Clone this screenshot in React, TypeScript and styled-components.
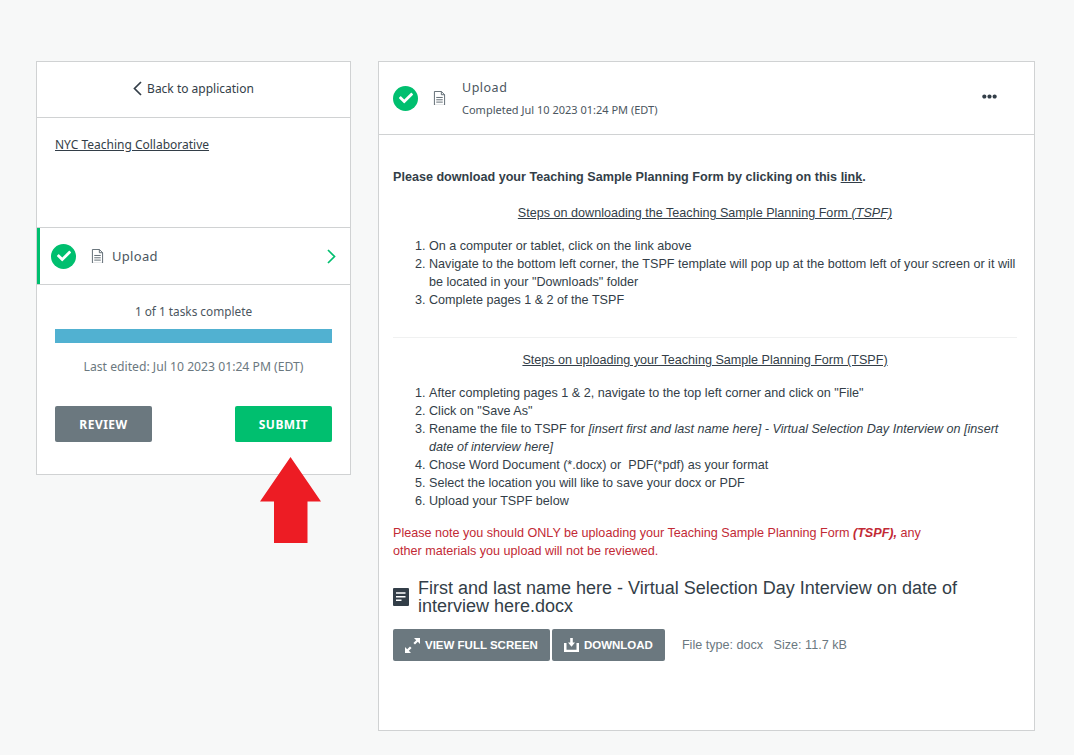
import React from 'react';
import styled, { createGlobalStyle } from 'styled-components';
import { FaCheck, FaEllipsisH } from 'react-icons/fa';

const plex = '"Noto Sans", "Open Sans", sans-serif';
const arial = '"Liberation Sans", Arial, sans-serif';

const DocIcon = ({ size = 15 }: { size?: number }) => (
  <svg width={size} height={size * 1.14} viewBox="0 0 14 16" fill="none" stroke="#59646d" strokeWidth="1">
    <path d="M1.5.5h7.500l3.500 3.500v11.500h-11z" />
    <path d="M9 .5v3.500h3.500M3.500 7h7M3.500 9.500h7M3.500 12h7" />
  </svg>
);

const StatusIcon = () => (
  <StatusCircle>
    <FaCheck size={14} color="#fff" />
  </StatusCircle>
);

const Chevron = ({ color, flip }: { color: string; flip?: boolean }) => (
  <svg width="9" height="15" viewBox="0 0 9 15" fill="none" stroke={color} strokeWidth="1.700">
    <path d={flip ? 'M1 1l6.500 6.500L1 14' : 'M8 1L1.500 7.500 8 14'} />
  </svg>
);

const App = () => {
  return (
    <>
      <GlobalStyle />
      <Page>
        <LeftColumn>
          <SidePanel>
            <BackRow>
              <Chevron color="#333e48" />
              <span>Back to application</span>
            </BackRow>
            <OrgBlock>
              <OrgLink>NYC Teaching Collaborative</OrgLink>
            </OrgBlock>
            <TaskRow>
              <StatusIcon />
              <DocSlot>
                <DocIcon size={13} />
              </DocSlot>
              <TaskName>Upload</TaskName>
              <TaskChevron>
                <Chevron color="#00bf6f" flip />
              </TaskChevron>
            </TaskRow>
            <Progress>
              <ProgressLabel>1 of 1 tasks complete</ProgressLabel>
              <ProgressBar />
              <LastEdited>Last edited: Jul 10 2023 01:24 PM (EDT)</LastEdited>
              <SideActions>
                <SideButton>REVIEW</SideButton>
                <SideButton $primary>SUBMIT</SideButton>
              </SideActions>
            </Progress>
          </SidePanel>
          <RedArrow width="61" height="86" viewBox="0 0 61 86">
            <path d="M30.500 0 61 44.500H47.500V86H14V44.500H0z" fill="#ed1c24" />
          </RedArrow>
        </LeftColumn>

        <MainPanel>
          <MainHeader>
            <StatusIcon />
            <HeaderDoc>
              <DocIcon size={13} />
            </HeaderDoc>
            <HeaderText>
              <HeaderTitle>Upload</HeaderTitle>
              <HeaderSub>Completed Jul 10 2023 01:24 PM (EDT)</HeaderSub>
            </HeaderText>
            <MoreButton>
              <FaEllipsisH size={15} color="#333e48" />
            </MoreButton>
          </MainHeader>

          <Body>
            <Lead>
              Please download your Teaching Sample Planning Form by clicking on this <u>link</u>.
            </Lead>
            <StepsTitle>
              Steps on downloading the Teaching Sample Planning Form <em>(TSPF)</em>
            </StepsTitle>
            <Steps>
              <li>On a computer or tablet, click on the link above</li>
              <li>
                Navigate to the bottom left corner, the TSPF template will pop up at the bottom left of your screen or
                it will be located in your "Downloads" folder
              </li>
              <li>Complete pages 1 &amp; 2 of the TSPF</li>
            </Steps>
            <Divider />
            <UploadTitle>Steps on uploading your Teaching Sample Planning Form (TSPF)</UploadTitle>
            <Steps>
              <li>After completing pages 1 &amp; 2, navigate to the top left corner and click on "File"</li>
              <li>Click on "Save As"</li>
              <li>
                Rename the file to TSPF for{' '}
                <em>[insert first and last name here] - Virtual Selection Day Interview on [insert date of interview here]</em>
              </li>
              <li>Chose Word Document (*.docx) or&nbsp; PDF(*pdf) as your format</li>
              <li>Select the location you will like to save your docx or PDF</li>
              <li>Upload your TSPF below</li>
            </Steps>
            <Warning>
              Please note you should ONLY be uploading your Teaching Sample Planning Form{' '}
              <strong>
                <em>(TSPF),</em>
              </strong>{' '}
              any
              <br />
              other materials you upload will not be reviewed.
            </Warning>
            <FileTitleRow>
              <svg width="16" height="18" viewBox="0 0 16 18">
                <rect width="16" height="18" rx="1" fill="#333e48" />
                <path d="M3 5h9.500M3 8.700h9.500M3 12.300h5.500" stroke="#fff" strokeWidth="1.400" />
              </svg>
              <FileTitle>First and last name here - Virtual Selection Day Interview on date of interview here.docx</FileTitle>
            </FileTitleRow>
            <FileActions>
              <FileButton>
                <svg width="15" height="15" viewBox="0 0 15 15" fill="#fff">
                  <path d="M9 0h6v6l-2.200-2.200-2.800 2.800-1.600-1.600 2.800-2.800zM6 15H0V9l2.200 2.200 2.800-2.800 1.600 1.600-2.800 2.800z" />
                </svg>
                VIEW FULL SCREEN
              </FileButton>
              <FileButton>
                <svg width="15" height="14" viewBox="0 0 15 14" fill="#fff">
                  <path d="M6.200 0h2.600v4.500h2.200L7.500 8.800 4 4.500h2.200z" />
                  <path d="M0 5h2.500v6.800h10V5H15v9H0z" />
                </svg>
                DOWNLOAD
              </FileButton>
              <FileMeta>File type: docx&nbsp;&nbsp; Size: 11.7 kB</FileMeta>
            </FileActions>
          </Body>
        </MainPanel>
      </Page>
    </>
  );
};

const GlobalStyle = createGlobalStyle`
  html, body {
    margin: 0;
    background: #f7f8f8;
  }
  * {
    box-sizing: border-box;
  }
`;

const Page = styled.div`
  display: flex;
  align-items: flex-start;
  gap: 27px;
  padding: 61px 39px 24px 36px;
  width: 1074px;
  height: 755px;
  overflow: hidden;
`;

const LeftColumn = styled.div`
  position: relative;
  width: 315px;
  flex: none;
`;

const SidePanel = styled.section`
  height: 414px;
  background: #fff;
  border: 1px solid #d0d2d3;
  font-family: ${plex};
  color: #333e48;
`;

const BackRow = styled.div`
  height: 56px;
  display: flex;
  align-items: center;
  justify-content: center;
  gap: 5px;
  padding-bottom: 2px;
  font-size: 12px;
  border-bottom: 1px solid #d0d2d3;
`;

const OrgBlock = styled.div`
  height: 109px;
  padding: 14px 18px 0;
`;

const OrgLink = styled.a`
  font-size: 12px;
  text-decoration: underline;
  color: #333e48;
`;

const TaskRow = styled.div`
  height: 58px;
  display: flex;
  align-items: center;
  padding-left: 14px;
  border-top: 1px solid #d0d2d3;
  border-bottom: 1px solid #d0d2d3;
  box-shadow: inset 3px 0 0 #00bf6f;
`;

const StatusCircle = styled.span`
  width: 25px;
  height: 25px;
  flex: none;
  border-radius: 50%;
  background: #00bf6f;
  display: flex;
  align-items: center;
  justify-content: center;
`;

const DocSlot = styled.span`
  display: flex;
  margin-left: 15px;
`;

const TaskName = styled.span`
  margin-left: 8px;
  font-size: 13px;
  letter-spacing: 0.3px;
  color: #4b5660;
`;

const TaskChevron = styled.span`
  display: flex;
  margin-left: auto;
  margin-right: 14px;
`;

const Progress = styled.div`
  padding: 17px 18px 0;
  text-align: center;
`;

const ProgressLabel = styled.div`
  font-size: 11.800px;
  line-height: 18px;
  color: #4b5660;
`;

const ProgressBar = styled.div`
  height: 14px;
  margin-top: 9px;
  background: #51b1d1;
`;

const LastEdited = styled.div`
  margin-top: 15px;
  font-size: 12.200px;
  line-height: 18px;
  color: #6b7880;
`;

const SideActions = styled.div`
  display: flex;
  justify-content: space-between;
  margin-top: 30px;
`;

const SideButton = styled.button<{ $primary?: boolean }>`
  width: 97px;
  height: 36px;
  border: none;
  border-radius: 2px;
  background: ${(p) => (p.$primary ? '#00bf6f' : '#6b787f')};
  color: #fff;
  font-family: ${plex};
  font-size: 12px;
  font-weight: 700;
  letter-spacing: 0.5px;
`;

const RedArrow = styled.svg`
  position: absolute;
  left: 224px;
  top: 396px;
`;

const MainPanel = styled.main`
  width: 657px;
  height: 670px;
  flex: none;
  background: #fff;
  border: 1px solid #d0d2d3;
`;

const MainHeader = styled.header`
  height: 73px;
  display: flex;
  align-items: center;
  padding: 0 37px 0 14px;
  border-bottom: 1px solid #d0d2d3;
  font-family: ${plex};
  color: #4b5660;
`;

const HeaderDoc = styled.span`
  display: flex;
  margin-left: 15px;
`;

const HeaderText = styled.div`
  margin-left: 16px;
`;

const HeaderTitle = styled.div`
  font-size: 12.500px;
  line-height: 18px;
  letter-spacing: 0.5px;
`;

const HeaderSub = styled.div`
  margin-top: 5px;
  font-size: 11px;
  line-height: 16px;
  color: #4b5660;
`;

const MoreButton = styled.span`
  display: flex;
  margin-left: auto;
  margin-bottom: 3px;
`;

const Body = styled.div`
  padding: 33px 17px 0 14px;
  font-family: ${arial};
  font-size: 12.600px;
  line-height: 18px;
  color: #333e48;
`;

const Lead = styled.p`
  margin: 0;
  font-weight: 700;
`;

const StepsTitle = styled.p`
  margin: 18px 0 0;
  text-align: center;
  text-decoration: underline;
`;

const UploadTitle = styled(StepsTitle)`
  margin-top: 13px;
`;

const Steps = styled.ol`
  margin: 15px 0 0;
  padding-left: 36px;
`;

const Divider = styled.hr`
  margin: 28px 0 0;
  border: none;
  border-top: 1px solid #f0f1f1;
`;

const Warning = styled.p`
  margin: 14px 0 0;
  color: #c22a35;
`;

const FileTitleRow = styled.div`
  display: flex;
  align-items: center;
  gap: 9px;
  margin-top: 19px;
`;

const FileTitle = styled.div`
  font-size: 18px;
  line-height: 18px;
  width: 570px;
`;

const FileActions = styled.div`
  display: flex;
  align-items: center;
  gap: 2px;
  margin-top: 14px;
`;

const FileButton = styled.button`
  height: 32px;
  padding: 0 12px;
  display: flex;
  align-items: center;
  gap: 5px;
  border: none;
  border-radius: 2px;
  background: #6b787f;
  color: #fff;
  font-family: ${arial};
  font-size: 11.500px;
  font-weight: 700;
`;

const FileMeta = styled.span`
  margin-left: 15px;
  color: #6b787f;
`;

export default App;
